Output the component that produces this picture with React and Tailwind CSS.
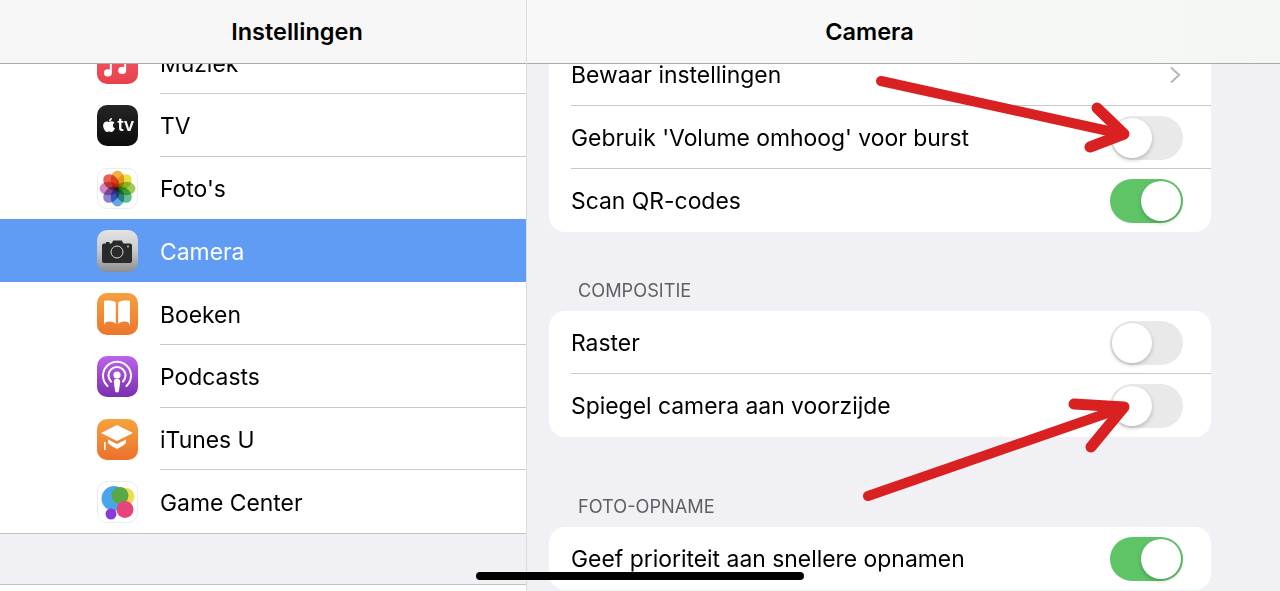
import React from 'react';
import { FaApple } from 'react-icons/fa';

function IconBox({ className, children }) {
  return (
    <div className={`w-[41.5px] h-[41.5px] mt-[1px] rounded-[10px] shrink-0 flex items-center justify-center overflow-hidden ${className}`}>
      {children}
    </div>
  );
}

function MusicIcon() {
  return (
    <IconBox className="bg-linear-to-b from-[#f0606c] to-[#e8404c]">
      <svg width="42" height="42" viewBox="0 0 42 42" fill="white">
        <ellipse cx="11" cy="31" rx="4" ry="3.6" />
        <ellipse cx="25.5" cy="28.5" rx="4" ry="3.6" />
        <path d="M13 31 V13 L29.5 9.5 V28.5 H27.5 V15 L15 17.6 V31z" />
      </svg>
    </IconBox>
  );
}

function TvIcon() {
  return (
    <IconBox className="bg-linear-to-b from-[#262626] to-[#0c0c0c] text-white gap-[1px]">
      <FaApple className="text-[16px] -mt-[1px]" />
      <span className="text-[18px] font-semibold leading-none -mt-[1px] tracking-tight">tv</span>
    </IconBox>
  );
}

function PhotosIcon() {
  const petals = [
    ['#f5ad45', 0],
    ['#e8e04a', 45],
    ['#9ccc55', 90],
    ['#62c090', 135],
    ['#62a8e4', 180],
    ['#8f80d0', 225],
    ['#d088c0', 270],
    ['#e8604e', 315],
  ];
  return (
    <IconBox className="bg-white border border-[#ececec]">
      <svg width="37" height="37" viewBox="0 0 36 36">
        {petals.map(([color, angle]) => (
          <ellipse key={angle} cx="18" cy="9.5" rx="6.6" ry="9" fill={color} className="mix-blend-multiply" transform={`rotate(${angle} 18 18)`} />
        ))}
      </svg>
    </IconBox>
  );
}

function CameraIcon() {
  return (
    <IconBox className="bg-linear-to-b from-[#e4e4e6] via-[#c8c8ca] to-[#8e8e90]">
      <svg width="32" height="26" viewBox="0 0 32 26">
        <path d="M1 7.5 a2 2 0 0 1 2-2 h2 v-1.5 h3.5 v1.5 h2 l1.8-3 h8.4 l1.8 3 h6.5 a2 2 0 0 1 2 2 v15.5 a2 2 0 0 1 -2 2 h-26 a2 2 0 0 1 -2-2z" fill="#2a2a2a" />
        <circle cx="16" cy="14" r="6" fill="none" stroke="#d8d8d8" strokeWidth="1" />
        <circle cx="27" cy="8.5" r="0.9" fill="#f2d24a" />
      </svg>
    </IconBox>
  );
}

function BooksIcon() {
  return (
    <IconBox className="bg-linear-to-b from-[#f5a040] to-[#ec762c]">
      <svg width="36" height="32" viewBox="0 0 36 32" fill="white">
        <path d="M5 3 C9 2 14 2.5 16.8 4.5 V26 C14 23 9 23 6.5 24.5 L5 27z" />
        <path d="M31 3 C27 2 22 2.5 19.2 4.5 V26 C22 23 27 23 29.5 24.5 L31 27z" />
      </svg>
    </IconBox>
  );
}

function PodcastsIcon() {
  return (
    <IconBox className="bg-linear-to-b from-[#bb63ec] to-[#7b2eb0]">
      <svg width="38" height="38" viewBox="0 0 38 38" fill="none" stroke="white">
        <path d="M9.5 28 a14 14 0 1 1 19 0" strokeWidth="2" strokeLinecap="round" />
        <path d="M13 23.5 a8.5 8.5 0 1 1 12 0" strokeWidth="2" strokeLinecap="round" />
        <circle cx="19" cy="17" r="3.6" fill="white" stroke="none" />
        <path d="M15.8 24 a3.2 3.2 0 0 1 6.4 0 l-1.2 8.5 a2 2 0 0 1 -4 0z" fill="white" stroke="none" />
      </svg>
    </IconBox>
  );
}

function ItunesIcon() {
  return (
    <IconBox className="bg-linear-to-b from-[#f5a23c] to-[#ec702c]">
      <svg width="36" height="34" viewBox="0 0 36 34" fill="white">
        <path d="M18 3 L34 11 L18 19 L2 11z" />
        <path d="M9 17.5 L18 22 L27 17.5 V21 C24 24 21 25 18 27 C15 25 12 24 9 21z" />
        <rect x="5" y="20" width="1.6" height="8" />
      </svg>
    </IconBox>
  );
}

function GameCenterIcon() {
  return (
    <IconBox className="bg-white border border-[#ececec]">
      <svg width="36" height="36" viewBox="0 0 36 36">
        <circle cx="27" cy="12.5" r="8.5" fill="#f2dc50" />
        <circle cx="15" cy="14.5" r="12.5" fill="#4aa6ea" />
        <circle cx="21" cy="11.5" r="8.5" fill="#58a848" />
        <circle cx="12" cy="30" r="5.5" fill="#8a3ad8" />
        <circle cx="26" cy="25.5" r="8.5" fill="#e8447c" />
      </svg>
    </IconBox>
  );
}

const sidebarItems = [
  { label: 'Muziek', icon: <MusicIcon /> },
  { label: 'TV', icon: <TvIcon /> },
  { label: "Foto's", icon: <PhotosIcon />, noLine: true },
  { label: 'Camera', icon: <CameraIcon />, selected: true, noLine: true },
  { label: 'Boeken', icon: <BooksIcon /> },
  { label: 'Podcasts', icon: <PodcastsIcon /> },
  { label: 'iTunes U', icon: <ItunesIcon /> },
  { label: 'Game Center', icon: <GameCenterIcon />, noLine: true },
];

function SidebarRow({ label, icon, selected, noLine }) {
  return (
    <div className={`h-[62.75px] flex items-center pl-[96.5px] ${selected ? 'bg-[#609cf4] text-white' : 'bg-white text-black'}`}>
      {icon}
      <div className={`ml-[22px] flex-1 h-full flex items-center pt-[4px] border-b ${noLine ? 'border-transparent' : 'border-[#c8c8ca]'}`}>
        {label}
      </div>
    </div>
  );
}

function Toggle({ on }) {
  return (
    <div className={`w-[73px] h-[44px] rounded-full flex items-center p-[2px] ${on ? 'bg-[#5ec466] justify-end' : 'bg-[#e9e9ea] justify-start'}`}>
      <div className="w-[40px] h-[40px] rounded-full bg-white shadow-[0_2px_4px_rgba(0,0,0,0.22)]" />
    </div>
  );
}

function Chevron() {
  return (
    <svg width="12" height="18" viewBox="0 0 12 18" fill="none" stroke="#b9b9bd" strokeWidth="2.2" className="mr-[2px]">
      <path d="M2 1.5 L10 9 L2 16.5" />
    </svg>
  );
}

function SettingRow({ label, right, last }) {
  return (
    <div className={`h-[63px] flex items-center justify-between ml-[22px] pr-[28px] pt-[2px] border-b ${last ? 'border-transparent' : 'border-[#c8c8ca]'}`}>
      <span>{label}</span>
      {right}
    </div>
  );
}

function Card({ children }) {
  return <div className="mx-[22px] w-[662px] bg-white rounded-[16px] overflow-hidden">{children}</div>;
}

function SectionLabel({ className, children }) {
  return <div className={`ml-[51px] h-[22px] flex items-center text-[18.2px] text-[#5f5f64] leading-none ${className}`}>{children}</div>;
}

export default function App() {
  return (
    <div className="relative w-[1280px] h-[591px] overflow-hidden flex bg-white text-[22.9px] font-['Inter',sans-serif]">
      {/* Left column: settings list */}
      <div className="w-[527px] h-full flex flex-col border-r border-[#dcdcdf] shrink-0">
        <div className="h-[64px] shrink-0 pl-[68px] bg-[#f8f7f7] border-b border-[#a9a9ab] flex items-center justify-center font-semibold text-[23.5px] z-10">
          Instellingen
        </div>
        <div className="flex-1 overflow-hidden">
          <div className="-mt-[33px]">
            {sidebarItems.map((item) => (
              <SidebarRow key={item.label} {...item} />
            ))}
          </div>
          <div className="h-[52px] bg-[#f0f0f5] border-t border-[#c0c0c2] border-b" />
        </div>
      </div>

      {/* Right column: camera settings */}
      <div className="flex-1 h-full flex flex-col bg-[#f0f0f5]">
        <div className="h-[64px] shrink-0 pr-[68px] bg-linear-to-r from-[#f8f8f8] via-[#f7f8f7] to-[#f3f7f2] border-b border-[#a9a9ab] flex items-center justify-center font-semibold text-[23.5px] z-10">
          Camera
        </div>
        <div className="flex-1 overflow-hidden">
          <div className="-mt-[21px]">
            <Card>
              <SettingRow label="Bewaar instellingen" right={<Chevron />} />
              <SettingRow label="Gebruik 'Volume omhoog' voor burst" right={<Toggle />} />
              <SettingRow label="Scan QR-codes" right={<Toggle on />} last />
            </Card>
            <SectionLabel className="mt-[47px] mb-[10px]">COMPOSITIE</SectionLabel>
            <Card>
              <SettingRow label="Raster" right={<Toggle />} />
              <SettingRow label="Spiegel camera aan voorzijde" right={<Toggle />} last />
            </Card>
            <SectionLabel className="mt-[58px] mb-[10px]">FOTO-OPNAME</SectionLabel>
            <Card>
              <SettingRow label="Geef prioriteit aan snellere opnamen" right={<Toggle on />} last />
            </Card>
          </div>
        </div>
      </div>

      {/* Red annotation arrows drawn over the screenshot */}
      <svg className="absolute inset-0 pointer-events-none" width="1280" height="591" viewBox="0 0 1280 591" fill="none" stroke="#d92122" strokeLinecap="round" strokeLinejoin="round">
        <path d="M881 81 L1122 134" strokeWidth="10" />
        <path d="M1097 108 L1124 134 L1090 147" strokeWidth="11" />
        <path d="M868 496 L1122 408" strokeWidth="10" />
        <path d="M1074 404 L1124 407 L1091 447" strokeWidth="11" />
      </svg>

      {/* Home indicator */}
      <div className="absolute left-[476px] top-[572px] w-[328px] h-[8px] rounded-full bg-black" />
    </div>
  );
}
